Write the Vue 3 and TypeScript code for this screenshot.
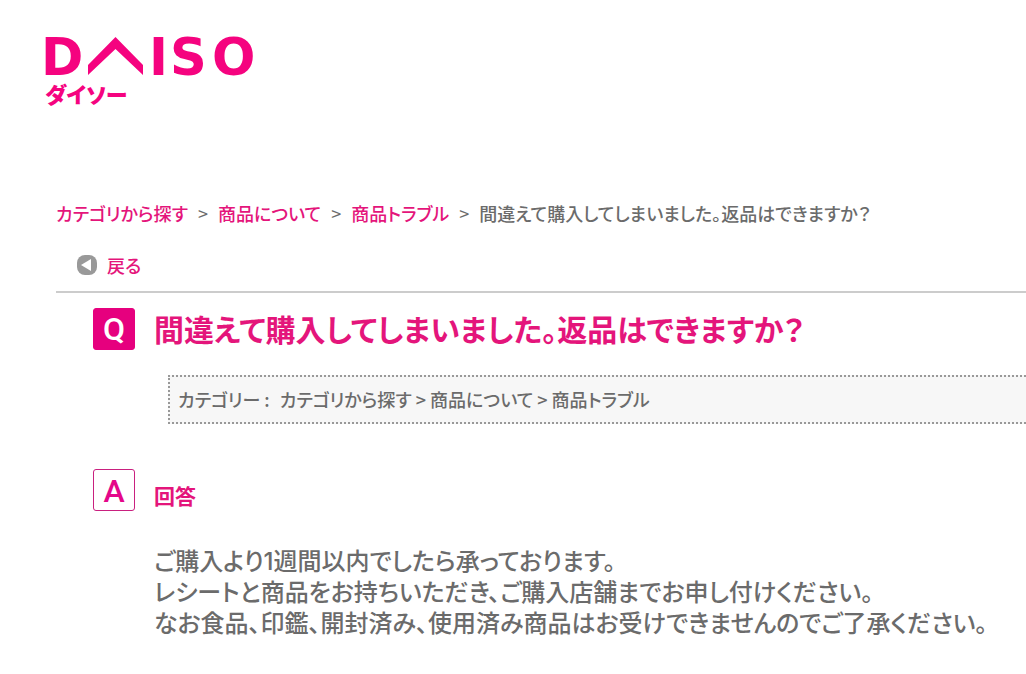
<script setup lang="ts">
interface Crumb {
  label: string
  href: string
}

const crumbs: Crumb[] = [
  { label: 'カテゴリから探す', href: '#category' },
  { label: '商品について', href: '#products' },
  { label: '商品トラブル', href: '#trouble' },
]
const question = '間違えて購入してしまいました。返品はできますか？'
const answer: string[] = [
  'ご購入より1週間以内でしたら承っております。',
  'レシートと商品をお持ちいただき、ご購入店舗までお申し付けください。',
  'なお食品、印鑑、開封済み、使用済み商品はお受けできませんのでご了承ください。',
]
</script>

<template>
  <div class="page">
    <header class="header">
      <a href="#top" class="logo" aria-label="DAISO ダイソー">
        <svg width="214" height="72" viewBox="0 0 214 72">
          <g class="latin">
            <text x="-3" y="39">D</text>
            <text x="105" y="39">I</text>
            <text x="126" y="39">S</text>
            <text x="168" y="39">O</text>
          </g>
          <path d="M44 39V29L71.500 1L99 29V39L71.500 13Z" />
          <text class="kana" x="1" y="67">ダイソー</text>
        </svg>
      </a>
    </header>

    <main class="content">
      <nav class="crumbs" aria-label="パンくず">
        <template v-for="c in crumbs" :key="c.href">
          <a :href="c.href">{{ c.label }}</a>
          <span class="sep">&gt;</span>
        </template>
        <span>{{ question }}</span>
      </nav>

      <div class="back">
        <a href="#back">
          <svg width="20" height="20" viewBox="0 0 20 20" aria-hidden="true">
            <rect width="20" height="20" rx="8" fill="#999" />
            <path d="M4 10L14 4V16Z" fill="#fff" />
          </svg>
          戻る
        </a>
      </div>

      <article class="faq">
        <div class="row">
          <span class="mark filled">Q</span>
          <h1>{{ question }}</h1>
        </div>
        <div class="category">
          <span class="key">カテゴリー :</span>
          <span>カテゴリから探す &gt; 商品について &gt; 商品トラブル</span>
        </div>
        <div class="row">
          <span class="mark">A</span>
          <h2>回答</h2>
        </div>
        <div class="answer">
          <p v-for="line in answer" :key="line">{{ line }}</p>
        </div>
      </article>
    </main>
  </div>
</template>

<style>
body {
  margin: 0;
  background: #fff;
}
</style>

<style scoped>
.page {
  color: #6b6b6b;
  font-family: "Noto Sans CJK JP", sans-serif;
  font-size: 18px;
  font-weight: 500;
  line-height: 24px;
  font-feature-settings: "palt";
}
a {
  color: #e4157b;
  text-decoration: none;
}
.header {
  padding: 36px 44px 0;
}
.logo,
.logo svg {
  display: block;
  width: 214px;
}
.logo svg {
  fill: #f5037f;
  overflow: visible;
}
.latin {
  font-family: "DejaVu Sans", sans-serif;
  font-size: 51px;
  font-weight: 700;
}
.kana {
  font-size: 22px;
  font-weight: 900;
}
.content {
  padding: 93px 0 32px 56px;
}
.crumbs {
  display: flex;
  flex-wrap: wrap;
}
.sep {
  margin: 0 10px;
  font-weight: 400;
}
.back {
  padding: 28px 21px 12px;
  border-bottom: 2px solid #ccc;
}
.back a {
  display: inline-flex;
  align-items: center;
  gap: 10px;
}
.faq {
  padding: 15px 0 0 37px;
}
.row {
  display: flex;
  align-items: flex-start;
  gap: 19px;
}
.mark {
  box-sizing: border-box;
  flex: none;
  width: 42px;
  height: 42px;
  border: 1px solid #c9207f;
  border-radius: 3px;
  color: #e4078a;
  font-family: Roboto, sans-serif;
  font-size: 32px;
  font-weight: 500;
  line-height: 42px;
  text-align: center;
}
.filled {
  border-color: #e6007e;
  background: #e6007e;
  color: #fff;
  line-height: 40px;
}
h1,
h2 {
  margin: 0;
  color: #e4157b;
  font-weight: 700;
}
h1 {
  font-size: 30px;
  line-height: 40px;
}
h2 {
  padding-top: 11px;
  font-size: 21px;
  line-height: 30px;
}
.category {
  margin: 25px 0 45px 75px;
  padding: 10px 8px 11px;
  border: 2px dotted #999;
  border-right: 0;
  background: #f7f7f7;
}
.key {
  margin-right: 10px;
}
.answer {
  padding: 35px 0 0 61px;
  font-family: Inter, "Noto Sans CJK JP", sans-serif;
  font-size: 24px;
  line-height: 31px;
}
.answer p {
  margin: 0;
}
</style>
